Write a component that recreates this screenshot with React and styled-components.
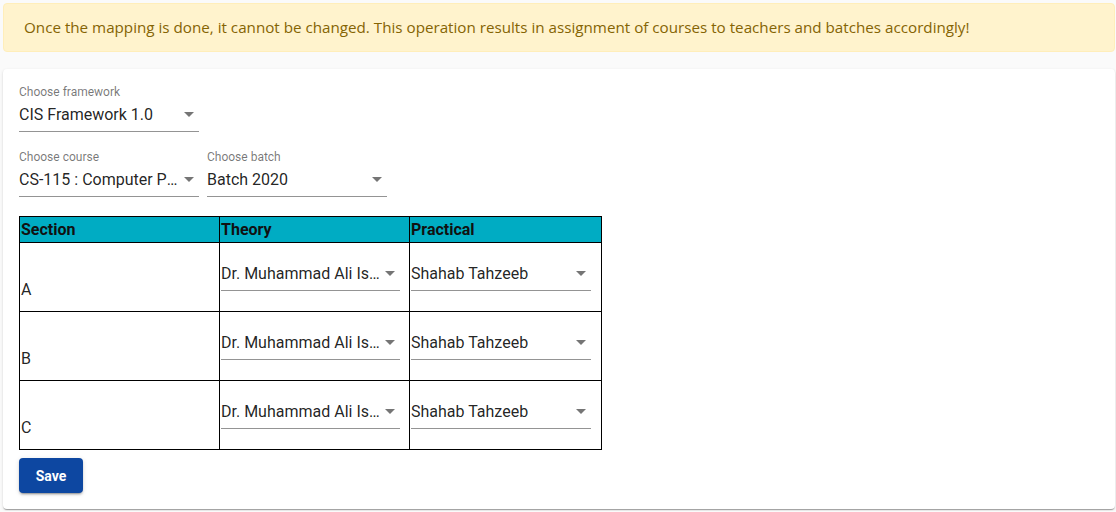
import React from 'react';
import styled, { createGlobalStyle } from 'styled-components';

const GlobalStyle = createGlobalStyle`
    html, body {
        margin: 0;
        padding: 0;
        background: #fafafa;
    }
    body {
        font-family: Roboto, "Liberation Sans", Arial, sans-serif;
    }
    * {
        box-sizing: border-box;
    }
`;

const Page = styled.div`
    padding: 3px 1px 2px 3px;
`;

const Alert = styled.div`
    background: #fff3cd;
    border: 1px solid #ffeeba;
    border-radius: 4px;
    color: #856404;
    font-family: "Open Sans", "Noto Sans", sans-serif;
    font-size: 15.2px;
    line-height: 24px;
    padding: 11px 20px 12px;
    margin-bottom: 17px;
`;

const Card = styled.div`
    background: #fff;
    border-radius: 4px;
    box-shadow: 0 2px 1px -1px rgba(0, 0, 0, 0.2), 0 1px 1px 0 rgba(0, 0, 0, 0.14), 0 1px 3px 0 rgba(0, 0, 0, 0.12);
    padding: 16px 16px 16px;
`;

const Row = styled.div`
    display: flex;
    gap: 8px;
    margin-bottom: ${(p) => p.$mb || 0}px;
`;

const Field = styled.div`
    display: flex;
    flex-direction: column;
    width: ${(p) => p.$w || 180}px;
`;

const Label = styled.label`
    font-size: 12px;
    line-height: 14px;
    color: rgba(0, 0, 0, 0.54);
`;

const SelectBox = styled.div`
    position: relative;
    width: ${(p) => p.$w || 180}px;
    padding: 4px 19px 5px 0;
    font-size: 16px;
    line-height: 23px;
    color: rgba(0, 0, 0, 0.87);
    border-bottom: 1px solid rgba(0, 0, 0, 0.42);
    white-space: nowrap;
    overflow: hidden;
    text-overflow: ellipsis;
    cursor: pointer;
`;

const Arrow = styled.span`
    position: absolute;
    right: 5px;
    top: 50%;
    margin-top: -3px;
    width: 0;
    height: 0;
    border-left: 5px solid transparent;
    border-right: 5px solid transparent;
    border-top: 5px solid rgba(0, 0, 0, 0.54);
`;

const Table = styled.table`
    border-collapse: collapse;
    table-layout: fixed;
    width: 582px;
    margin-bottom: 8px;
    font-size: 16px;
    color: rgba(0, 0, 0, 0.87);
`;

const Th = styled.th`
    background: #00acc3;
    color: #111;
    border: 1px solid #000;
    text-align: left;
    font-weight: 700;
    line-height: 19px;
    padding: 3px 1px 3px;
`;

const Td = styled.td`
    border: 1px solid #000;
    line-height: 19px;
    vertical-align: ${(p) => (p.$bottom ? 'bottom' : 'top')};
    padding: ${(p) => (p.$bottom ? '0 1px 12px' : '15px 1px 20px')};
`;

const SaveButton = styled.button`
    background: #0d47a1;
    color: #fff;
    border: none;
    border-radius: 4px;
    min-width: 64px;
    height: 35px;
    padding: 6px 16px;
    font-family: Roboto, sans-serif;
    font-weight: 700;
    font-size: 14px;
    box-shadow: 0 3px 1px -2px rgba(0, 0, 0, 0.2), 0 2px 2px 0 rgba(0, 0, 0, 0.14), 0 1px 5px 0 rgba(0, 0, 0, 0.12);
    cursor: pointer;
`;

function Select({ value, width }) {
    return (
        <SelectBox $w={width}>
            {value}
            <Arrow />
        </SelectBox>
    );
}

const sections = ['A', 'B', 'C'];

export default function App() {
    return (
        <Page>
            <GlobalStyle />
            <Alert>
                Once the mapping is done, it cannot be changed. This operation results in assignment of courses to teachers and batches accordingly!
            </Alert>
            <Card>
                <Row $mb={18}>
                    <Field>
                        <Label>Choose framework</Label>
                        <Select value="CIS Framework 1.0" />
                    </Field>
                </Row>
                <Row $mb={19}>
                    <Field>
                        <Label>Choose course</Label>
                        <Select value="CS-115 : Computer Programming" />
                    </Field>
                    <Field>
                        <Label>Choose batch</Label>
                        <Select value="Batch 2020" />
                    </Field>
                </Row>
                <Table>
                    <colgroup>
                        <col style={{ width: 200 }} />
                        <col style={{ width: 190 }} />
                        <col style={{ width: 192 }} />
                    </colgroup>
                    <thead>
                        <tr>
                            <Th>Section</Th>
                            <Th>Theory</Th>
                            <Th>Practical</Th>
                        </tr>
                    </thead>
                    <tbody>
                        {sections.map((s) => (
                            <tr key={s}>
                                <Td $bottom>{s}</Td>
                                <Td>
                                    <Select value="Dr. Muhammad Ali Ismail" width={179} />
                                </Td>
                                <Td>
                                    <Select value="Shahab Tahzeeb" width={180} />
                                </Td>
                            </tr>
                        ))}
                    </tbody>
                </Table>
                <SaveButton>Save</SaveButton>
            </Card>
        </Page>
    );
}
